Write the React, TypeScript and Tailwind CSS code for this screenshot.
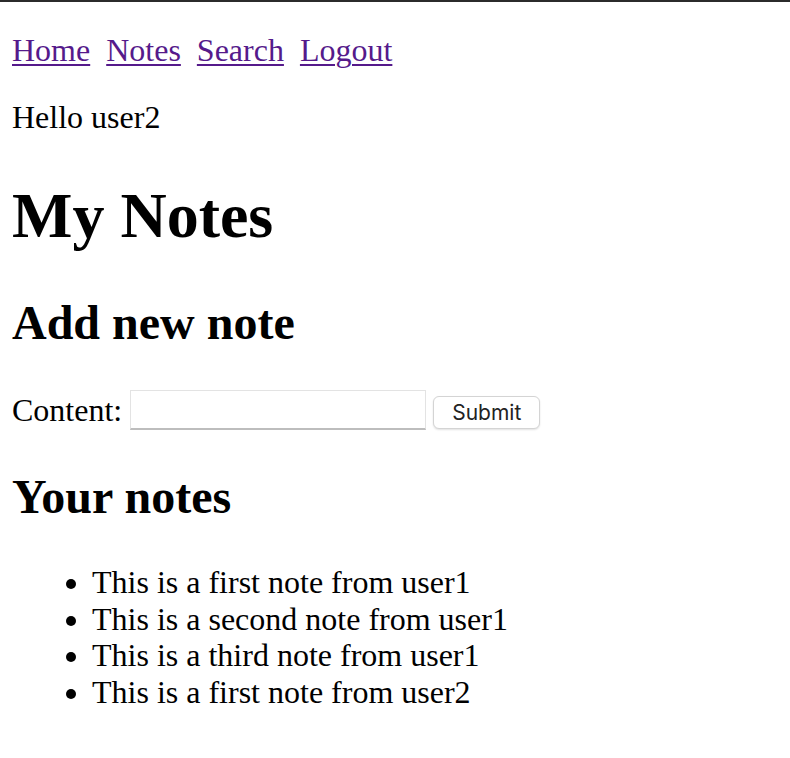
import React from 'react';

const links = ['Home', 'Notes', 'Search', 'Logout'];

const notes = [
  'This is a first note from user1',
  'This is a second note from user1',
  'This is a third note from user1',
  'This is a first note from user2',
];

export default function App() {
  return (
    <div className="min-h-[758px] bg-white text-black font-['Liberation_Serif',_'Times_New_Roman',serif] text-[32px] leading-[normal]">
      <div className="h-[2px] bg-[#2b2b2b]" />
      <div className="pl-[12px]">
        <nav className="mt-[30px] flex">
          {links.map((l, i) => (
            <a key={l} href="#" className={`text-[#551a8b] underline decoration-[2px] underline-offset-[3px] ${i > 0 ? 'ml-[16px]' : ''}`}>
              {l}
            </a>
          ))}
        </nav>
        <p className="mt-[30px]">Hello user2</p>
        <h1 className="mt-[43px] text-[64px] font-bold leading-[normal]">My Notes</h1>
        <h2 className="mt-[42px] text-[48px] font-bold leading-[normal]">Add new note</h2>
        <form className="mt-[40px] flex items-center" onSubmit={(e) => e.preventDefault()}>
          <label htmlFor="content">Content:</label>
          <input
            id="content"
            type="text"
            className="ml-[8px] w-[296px] h-[40px] border border-[#e3e3e3] border-b-[2px] border-b-[#bdbdbd] bg-white outline-none"
          />
          <button
            type="submit"
            className="ml-[7px] mt-[4px] w-[107px] h-[33px] rounded-[6px] border border-[#d4d4d4] bg-white shadow-[0_1px_2px_rgba(0,0,0,0.12)] font-['Inter',sans-serif] text-[21px] text-[#222] leading-none"
          >
            Submit
          </button>
        </form>
        <h2 className="mt-[39px] text-[48px] font-bold leading-[normal]">Your notes</h2>
        <ul className="mt-[40px] list-disc pl-[80px]">
          {notes.map((n) => (
            <li key={n} className="leading-[36.5px]">{n}</li>
          ))}
        </ul>
      </div>
    </div>
  );
}
